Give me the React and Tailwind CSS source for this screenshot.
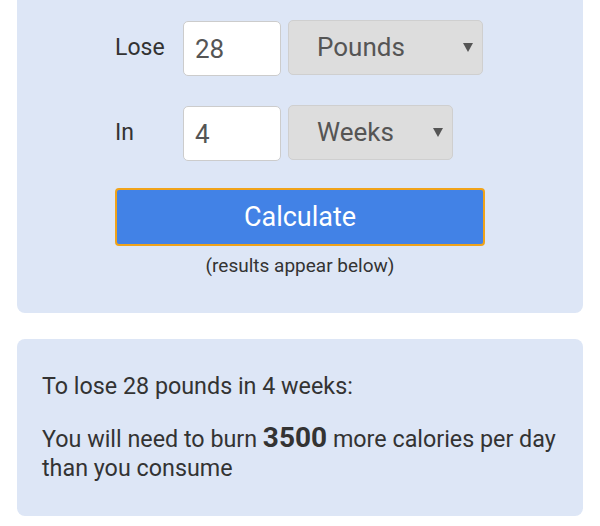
function Caret() {
  return (
    <svg width="10" height="9" viewBox="0 0 10 9" className="shrink-0">
      <polygon points="0,0 10,0 5,9" fill="#555" />
    </svg>
  );
}

function Row({ label, value, unit, width }) {
  return (
    <div className="flex items-start">
      <label className="w-[68px] self-center text-[23px]">{label}</label>
      <input
        defaultValue={value}
        className="w-[98px] h-[55px] mt-[1px] bg-white border border-[#ccc] rounded-[5px] px-[11px] text-[26px] text-[#555] outline-none"
      />
      <div
        className={`ml-[7px] ${width} h-[55px] bg-[#dddddd] border border-[#cfcfcf] rounded-[5px] flex items-center justify-between pl-[28px] pr-[9px] text-[26px] text-[#555]`}
      >
        <span>{unit}</span>
        <Caret />
      </div>
    </div>
  );
}

export default function App() {
  return (
    <div className="bg-white h-[526px] px-[17px] text-[#333]" style={{ fontFamily: "Roboto, sans-serif" }}>
      {/* Calculator form */}
      <div className="bg-[#dde6f6] rounded-b-lg pt-[20px] pb-[32px] flex justify-center">
        <div className="w-[370px]">
          <Row label="Lose" value="28" unit="Pounds" width="w-[195px]" />
          <div className="mt-[29px]">
            <Row label="In" value="4" unit="Weeks" width="w-[165px]" />
          </div>
          <button className="mt-[27px] w-[370px] h-[58px] bg-[#4282e6] border-2 border-[#f0a31a] rounded-[4px] text-white text-[27px]">
            Calculate
          </button>
          <p className="text-center text-[19px] mt-[6px]">(results appear below)</p>
        </div>
      </div>

      {/* Results */}
      <div className="bg-[#dde6f6] rounded-lg mt-[26px] h-[177px] pl-[25px] pr-[8px] pt-[30px] text-[23.3px]">
        <p>To lose 28 pounds in 4 weeks:</p>
        <p className="mt-[21px] leading-[29px]">
          You will need to burn <b className="text-[28px] leading-none">3500</b> more calories per day
          than you consume
        </p>
      </div>
    </div>
  );
}
